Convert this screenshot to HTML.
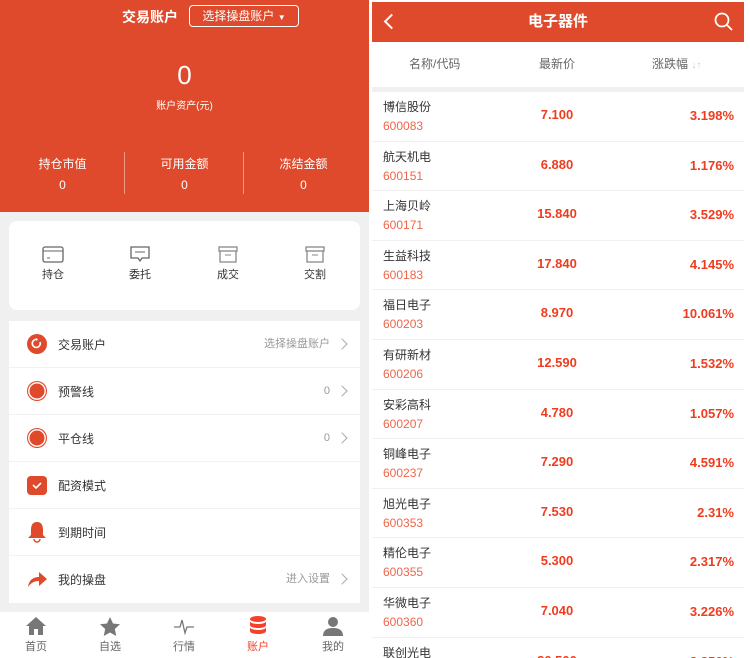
<!DOCTYPE html><html><head><meta charset="utf-8"><style>
*{margin:0;padding:0;box-sizing:border-box}
html,body{width:750px;height:658px;overflow:hidden}
body{background:#fff;font-family:"Liberation Sans","Noto Sans CJK SC",sans-serif;position:relative}
.L{position:absolute;left:0;top:0;width:369px;height:658px;background:#f0f0f0}
.hd{position:absolute;left:0;top:0;width:369px;height:212px;background:#de4a2b;color:#fff;text-align:center}
.ab{position:absolute;font-size:12px}
.card{position:absolute;left:9px;top:221px;width:351px;height:89px;background:#fff;border-radius:8px}
.ic{position:absolute;top:24px;width:60px;text-align:center;font-size:11px;color:#333}
.list{position:absolute;left:9px;top:321px;width:351px;background:#fff}
.it{height:47px;border-bottom:1px solid #f2f2f2;position:relative;font-size:12px;color:#333}
.it .t{position:absolute;left:49px;top:15px}
.it .r{position:absolute;right:30px;top:15px;color:#999;font-size:11px;line-height:16px}
.it .ar{position:absolute;right:14px;top:19px;width:8px;height:8px;border-top:1.3px solid #aaa;border-right:1.3px solid #aaa;transform:rotate(45deg)}
.it svg{position:absolute;left:17px;top:12px}
.nav{position:absolute;left:0;top:612px;width:369px;height:46px;background:#fff}
.nv{position:absolute;top:0;width:60px;text-align:center;font-size:11px;color:#666}
.nv span{position:absolute;top:26px;left:0;width:60px}
.R{position:absolute;left:372px;top:0;width:372px;height:658px;background:#fff;overflow:hidden}
.rh{position:absolute;left:0;top:2px;width:372px;height:40px;background:#de4a2b;color:#fff;font-weight:bold;font-size:15px;text-align:center;line-height:40px}
.ch{position:absolute;top:55px;font-size:12px;color:#666}
.row{position:absolute;left:0;width:372px;height:49.6px;border-bottom:1px solid #f0f0f0}
.row .n{position:absolute;left:11px;top:6px;font-size:12px;color:#333}
.row .c{position:absolute;left:11px;top:27px;font-size:12px;color:#f0654a}
.row .p{position:absolute;left:145px;width:80px;text-align:center;top:15px;font-size:13px;color:#f03c1e;font-weight:bold}
.row .g{position:absolute;right:10px;top:16px;font-size:13px;color:#f03c1e;font-weight:bold}
</style></head><body>
<div class="L">
<div class="hd">
<div style="position:absolute;left:122px;top:7px;font-size:14px;font-weight:bold">交易账户</div>
<div style="position:absolute;left:189px;top:5px;width:110px;height:22px;border:1px solid #fff;border-radius:4px;font-size:12px;line-height:20px">选择操盘账户 <span style="font-size:8px">▼</span></div>
<div style="position:absolute;left:0;width:369px;top:60px;font-size:26px">0</div>
<div style="position:absolute;left:0;width:369px;top:97px;font-size:10px">账户资产(元)</div>
<div class="ab" style="left:0;width:125px;top:155px">持仓市值<br><span style="line-height:26px">0</span></div>
<div class="ab" style="left:125px;width:119px;top:155px">可用金额<br><span style="line-height:26px">0</span></div>
<div class="ab" style="left:244px;width:119px;top:155px">冻结金额<br><span style="line-height:26px">0</span></div>
<div style="position:absolute;left:124px;top:152px;width:1px;height:42px;background:#f19a85"></div>
<div style="position:absolute;left:243px;top:152px;width:1px;height:42px;background:#f19a85"></div>
</div>
<div class="card">
<div class="ic" style="left:14px"><svg width="22" height="18"><rect x="1" y="2" width="20" height="15" rx="2" fill="none" stroke="#666" stroke-width="1.3"/><line x1="1" y1="6" x2="21" y2="6" stroke="#666"/><line x1="5" y1="13" x2="8" y2="13" stroke="#666"/></svg><div>持仓</div></div>
<div class="ic" style="left:101px"><svg width="22" height="18"><path d="M2 2h18v11h-7l-2 3-2-3H2z" fill="none" stroke="#666" stroke-width="1.3"/><line x1="6" y1="7" x2="16" y2="7" stroke="#666"/></svg><div>委托</div></div>
<div class="ic" style="left:189px"><svg width="22" height="18"><rect x="2" y="2" width="18" height="4" fill="none" stroke="#888" stroke-width="1.3"/><path d="M3 6v11h16V6" fill="none" stroke="#888" stroke-width="1.3"/><line x1="8" y1="10" x2="14" y2="10" stroke="#888"/></svg><div>成交</div></div>
<div class="ic" style="left:276px"><svg width="22" height="18"><rect x="2" y="2" width="18" height="4" fill="none" stroke="#888" stroke-width="1.3"/><path d="M3 6v11h16V6" fill="none" stroke="#888" stroke-width="1.3"/><line x1="8" y1="10" x2="14" y2="10" stroke="#888"/></svg><div>交割</div></div>
</div>
<div class="list">
<div class="it"><svg width="22" height="22"><circle cx="11" cy="11" r="10" fill="#de4a2b"/><path d="M14 9a4 4 0 1 1-3-2.5" fill="none" stroke="#fff" stroke-width="1.6"/><path d="M10 5l2 1.5-2 1.5z" fill="#fff"/></svg><span class="t">交易账户</span><span class="r">选择操盘账户</span><i class="ar"></i></div>
<div class="it"><svg width="22" height="22"><circle cx="11" cy="11" r="10" fill="#de4a2b"/><circle cx="11" cy="11" r="8.2" fill="none" stroke="#fff" stroke-width="1.4"/></svg><span class="t">预警线</span><span class="r">0</span><i class="ar"></i></div>
<div class="it"><svg width="22" height="22"><circle cx="11" cy="11" r="10" fill="#de4a2b"/><circle cx="11" cy="11" r="8.2" fill="none" stroke="#fff" stroke-width="1.4"/></svg><span class="t">平仓线</span><span class="r">0</span><i class="ar"></i></div>
<div class="it"><svg width="22" height="22"><rect x="1" y="2" width="20" height="19" rx="4" fill="#de4a2b"/><path d="M7 11l3 3 5-5" fill="none" stroke="#fff" stroke-width="1.6"/></svg><span class="t">配资模式</span></div>
<div class="it"><svg width="22" height="22"><path d="M11 1c-5 0-6 4-6 8v5l-3 3h18l-3-3V9c0-4-1-8-6-8z" fill="#de4a2b"/><path d="M8 18a3 3 0 0 0 6 0" fill="none" stroke="#de4a2b" stroke-width="1.4"/></svg><span class="t">到期时间</span></div>
<div class="it" style="border:0"><svg width="22" height="22"><path d="M2 19c1-7 5-10 11-10V4l8 7-8 7v-5c-5 0-8 2-11 6z" fill="#de4a2b"/></svg><span class="t">我的操盘</span><span class="r">进入设置</span><i class="ar"></i></div>
</div>
<div class="nav">
<div class="nv" style="left:6px"><svg width="22" height="20" style="margin-top:4px"><path d="M11 1L1 10h3v9h5v-6h4v6h5v-9h3z" fill="#777"/></svg><span>首页</span></div>
<div class="nv" style="left:80px"><svg width="22" height="20" style="margin-top:4px"><path d="M11 1l3 6.5 7 .8-5.2 4.7 1.5 7L11 16.5 4.7 20l1.5-7L1 8.3l7-.8z" fill="#777"/></svg><span>自选</span></div>
<div class="nv" style="left:154px"><svg width="22" height="20" style="margin-top:4px"><path d="M1 11h6l2-7 3 13 2-6h7" fill="none" stroke="#777" stroke-width="1.3"/></svg><span>行情</span></div>
<div class="nv" style="left:228px;color:#f5402a"><svg width="22" height="22" style="margin-top:3px"><ellipse cx="11" cy="4" rx="8" ry="3" fill="#f5402a"/><path d="M3 6c0 4 16 4 16 0v4c0 4-16 4-16 0zM3 12c0 4 16 4 16 0v4c0 4-16 4-16 0z" fill="#f5402a"/></svg><span>账户</span></div>
<div class="nv" style="left:303px"><svg width="22" height="20" style="margin-top:4px"><circle cx="11" cy="6" r="5" fill="#777"/><path d="M1 20c0-6 4-8 10-8s10 2 10 8z" fill="#777"/></svg><span>我的</span></div>
</div>
</div>
<div class="R">
<div class="rh">电子器件
<div style="position:absolute;left:14px;top:14px;width:11px;height:11px;border-left:2px solid #fff;border-bottom:2px solid #fff;transform:rotate(45deg)"></div>
<svg width="20" height="20" style="position:absolute;right:10px;top:10px"><circle cx="8" cy="8" r="6.5" fill="none" stroke="#fff" stroke-width="1.8"/><line x1="13" y1="13" x2="18" y2="18" stroke="#fff" stroke-width="1.8"/></svg></div>
<div class="ch" style="left:37px">名称/代码</div>
<div class="ch" style="left:167px">最新价</div>
<div class="ch" style="left:280px">涨跌幅 <span style="color:#ccc;font-size:10px">↓↑</span></div>
<div style="position:absolute;left:0;top:87px;width:372px;height:5px;background:#f0f0f0"></div>
<div class="row" style="top:92px"><div class="n">博信股份</div><div class="c">600083</div><div class="p">7.100</div><div class="g">3.198%</div></div>
<div class="row" style="top:141.6px"><div class="n">航天机电</div><div class="c">600151</div><div class="p">6.880</div><div class="g">1.176%</div></div>
<div class="row" style="top:191.2px"><div class="n">上海贝岭</div><div class="c">600171</div><div class="p">15.840</div><div class="g">3.529%</div></div>
<div class="row" style="top:240.8px"><div class="n">生益科技</div><div class="c">600183</div><div class="p">17.840</div><div class="g">4.145%</div></div>
<div class="row" style="top:290.4px"><div class="n">福日电子</div><div class="c">600203</div><div class="p">8.970</div><div class="g">10.061%</div></div>
<div class="row" style="top:340px"><div class="n">有研新材</div><div class="c">600206</div><div class="p">12.590</div><div class="g">1.532%</div></div>
<div class="row" style="top:389.6px"><div class="n">安彩高科</div><div class="c">600207</div><div class="p">4.780</div><div class="g">1.057%</div></div>
<div class="row" style="top:439.2px"><div class="n">铜峰电子</div><div class="c">600237</div><div class="p">7.290</div><div class="g">4.591%</div></div>
<div class="row" style="top:488.8px"><div class="n">旭光电子</div><div class="c">600353</div><div class="p">7.530</div><div class="g">2.31%</div></div>
<div class="row" style="top:538.4px"><div class="n">精伦电子</div><div class="c">600355</div><div class="p">5.300</div><div class="g">2.317%</div></div>
<div class="row" style="top:588px"><div class="n">华微电子</div><div class="c">600360</div><div class="p">7.040</div><div class="g">3.226%</div></div>
<div class="row" style="top:637.6px"><div class="n">联创光电</div><div class="c">600363</div><div class="p">20.500</div><div class="g">2.256%</div></div>
</div>
</body></html>
